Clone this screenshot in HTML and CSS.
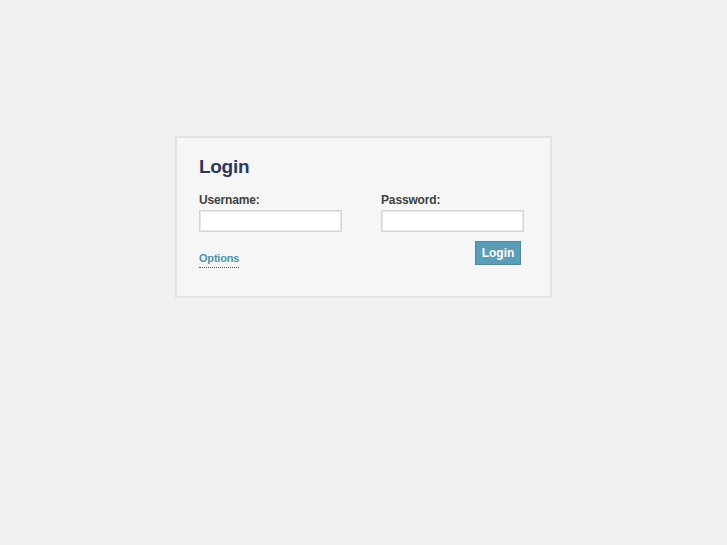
FILE: index.html
```html
<!DOCTYPE html>
<html>
<head>
<meta charset="utf-8">
<link rel="stylesheet" href="styles.css">
</head>
<body>
<div class="page">
  <form class="login-box">
    <h1 class="title">Login</h1>
    <div class="fields">
      <div class="field">
        <label class="label">Username:</label>
        <input class="input" type="text">
      </div>
      <div class="field">
        <label class="label">Password:</label>
        <input class="input" type="password">
      </div>
    </div>
    <div class="actions">
      <a class="options" href="#">Options</a>
      <button class="btn" type="button">Login</button>
    </div>
  </form>
</div>
</body>
</html>
```
FILE: styles.css
```css
html, body {
  margin: 0;
  padding: 0;
  background: #f0f0f0;
  font-family: "Liberation Sans", Arial, sans-serif;
}
.page {
  padding-top: 136px;
  padding-left: 175px;
}
.login-box {
  box-sizing: border-box;
  width: 377px;
  height: 162px;
  background: #f6f6f6;
  border: 2px solid #e2e2e2;
  padding: 17px 28px 0 22px;
}
.title {
  margin: 0;
  font-size: 19px;
  font-weight: bold;
  color: #2b3862;
  line-height: 24px;
  letter-spacing: -0.3px;
}
.fields {
  display: flex;
  gap: 39px;
  margin-top: 14px;
}
.field {
  display: flex;
  flex-direction: column;
}
.label {
  font-size: 12px;
  font-weight: bold;
  color: #404040;
  line-height: 14px;
  margin-bottom: 3px;
  letter-spacing: -0.15px;
}
.input {
  box-sizing: border-box;
  width: 143px;
  height: 22px;
  margin: 0;
  border: 1px solid #d4d4d4;
  box-shadow: inset 0 0 0 1px #e6e6e6;
  background: #fff;
  padding: 2px 4px;
}
.actions {
  display: flex;
  justify-content: space-between;
  align-items: flex-start;
  margin-top: 9px;
  width: 322px;
}
.options {
  margin-top: 11px;
  font-size: 11px;
  font-weight: bold;
  color: #4e93ab;
  text-decoration: none;
  border-bottom: 1px dotted #555;
  line-height: 13px;
  padding-bottom: 2px;
  letter-spacing: -0.2px;
}
.btn {
  box-sizing: border-box;
  width: 46px;
  height: 24px;
  margin: 0;
  border: 1px solid #4a8aa5;
  background: #5b9cb7;
  color: #fff;
  font-family: "Liberation Sans", Arial, sans-serif;
  font-size: 12px;
  font-weight: bold;
  padding: 0;
}
```
